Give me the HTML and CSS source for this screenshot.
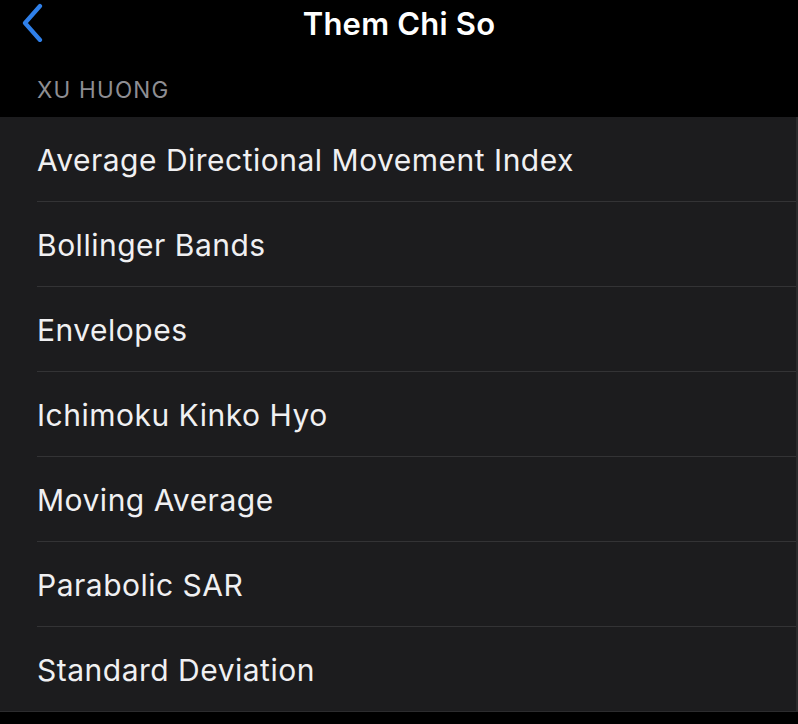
FILE: index.html
```html
<!DOCTYPE html>
<html>
<head>
<meta charset="utf-8">
<link rel="stylesheet" href="styles.css">
</head>
<body>
<div class="screen">
  <header class="navbar">
    <svg class="back" width="26" height="40" viewBox="0 0 26 40">
      <path d="M20 4 L5 21 L20 38" fill="none" stroke="#2f80ea" stroke-width="4.2" stroke-linecap="round" stroke-linejoin="round"/>
    </svg>
    <h1 class="title">Them Chi So</h1>
  </header>
  <div class="section-label">XU HUONG</div>
  <ul class="list">
    <li class="row">Average Directional Movement Index</li>
    <li class="row">Bollinger Bands</li>
    <li class="row">Envelopes</li>
    <li class="row">Ichimoku Kinko Hyo</li>
    <li class="row">Moving Average</li>
    <li class="row">Parabolic SAR</li>
    <li class="row">Standard Deviation</li>
  </ul>
</div>
</body>
</html>
```
FILE: styles.css
```css
* { box-sizing: border-box; }
html, body {
  margin: 0;
  padding: 0;
  background: #000;
}
.screen {
  width: 798px;
  height: 724px;
  background: #000;
  font-family: Inter, "Noto Sans", sans-serif;
  color: #f2f2f4;
  overflow: hidden;
}
.navbar {
  position: relative;
  height: 46px;
  display: flex;
  align-items: center;
  justify-content: center;
}
.back {
  position: absolute;
  left: 20px;
  top: 2px;
}
.title {
  margin: 0;
  font-size: 31px;
  font-weight: 600;
  color: #fff;
  letter-spacing: 0.2px;
}
.section-label {
  height: 71px;
  padding: 30px 0 0 37px;
  font-size: 22.5px;
  color: #8e8e93;
  letter-spacing: 1.2px;
}
.list {
  list-style: none;
  margin: 0;
  padding: 0 0 0 37px;
  background: #1c1c1e;
  border-right: 2px solid #2a2a2c;
  border-bottom: 1px solid #2c2c2e;
}
.row {
  height: 85px;
  display: flex;
  align-items: center;
  padding-top: 2px;
  font-size: 30px;
  color: #f0f0f2;
  letter-spacing: 0.5px;
  border-bottom: 1px solid #333335;
}
.row:last-child {
  border-bottom: none;
  height: 84px;
}
```
